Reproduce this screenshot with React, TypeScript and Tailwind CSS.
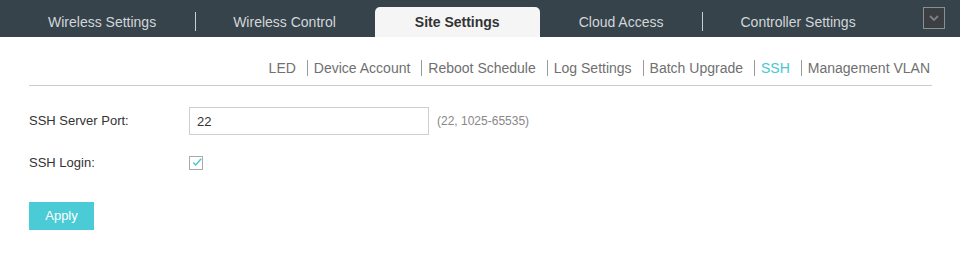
import { useState } from "react"

const tabs = ["Wireless Settings", "Wireless Control", "Site Settings", "Cloud Access", "Controller Settings"]
const activeTab = "Site Settings"

const subTabs = ["LED", "Device Account", "Reboot Schedule", "Log Settings", "Batch Upgrade", "SSH", "Management VLAN"]
const activeSub = "SSH"

export default function App() {
  const [port, setPort] = useState("22")
  const [login, setLogin] = useState(true)

  return (
    <div className="w-[960px] h-[272px] bg-white font-['Liberation_Sans',Arial,sans-serif] overflow-hidden">
      {/* Top tabs */}
      <div className="h-[37px] bg-[#36434b] flex items-end pl-[9px] relative">
        {tabs.map((t, i) => {
          const active = t === activeTab
          const next = tabs[i + 1]
          const showSep = next && !active && next !== activeTab
          return (
            <div key={t} className="flex items-center h-[30px]">
              <div
                className={
                  active
                    ? "h-[30px] px-[40px] flex items-center rounded-t-[5px] bg-[#f5f5f5] text-[14px] font-bold text-[#333]"
                    : "h-[30px] px-[39px] flex items-center text-[14px] text-[#d2d6d9]"
                }
              >
                {t}
              </div>
              {showSep && <div className="w-px h-[19px] bg-[#c9ced1] mb-[2px] -mr-[2px]" />}
            </div>
          )
        })}
        <button className="absolute right-[15px] top-[7px] w-[22px] h-[22px] border border-[#8a8f92] bg-[#3b3f42] flex items-center justify-center">
          <svg width="10" height="6" viewBox="0 0 10 6">
            <path d="M1 1 L5 5 L9 1" stroke="#7d8184" strokeWidth="1.8" fill="none" />
          </svg>
        </button>
      </div>

      <div className="ml-[29px] mr-[28px]">
        {/* Sub tabs */}
        <div className="mt-[21px] pb-[7px] border-b border-[#cccccc] flex justify-end pr-[2px]">
          {subTabs.map((s, i) => (
            <div key={s} className="flex items-center h-[20px]">
              {i > 0 && <div className="w-px h-[16px] bg-[#9a9a9a] ml-[11px] mr-[6px]" />}
              <span className={s === activeSub ? "text-[14px] text-[#4ac6d3]" : "text-[14px] text-[#707070]"}>{s}</span>
            </div>
          ))}
        </div>

        {/* Form */}
        <div className="mt-[21px] flex items-center h-[28px]">
          <label className="w-[160px] text-[13px] text-[#333]">SSH Server Port:</label>
          <input
            value={port}
            onChange={(e) => setPort(e.target.value)}
            className="w-[240px] h-[28px] border border-[#cfcfcf] px-[7px] text-[13px] text-[#333] outline-none"
          />
          <span className="ml-[8px] text-[12px] text-[#888]">(22, 1025-65535)</span>
        </div>

        <div className="mt-[14px] flex items-center h-[28px]">
          <label className="w-[160px] text-[13px] text-[#333]">SSH Login:</label>
          <button
            onClick={() => setLogin(!login)}
            className="w-[14px] h-[14px] border border-[#aaaaaa] bg-white flex items-center justify-center"
          >
            {login && (
              <svg width="12" height="10" viewBox="0 0 12 10" className="-mt-[2px] ml-[2px]">
                <path d="M1.5 5.5 L4.5 8.5 L11 1" stroke="#4ac6d3" strokeWidth="1.8" fill="none" />
              </svg>
            )}
          </button>
        </div>

        <button className="mt-[25px] w-[65px] h-[28px] bg-[#4bcbd6] text-white text-[13px] flex items-center justify-center">
          Apply
        </button>
      </div>
    </div>
  )
}
